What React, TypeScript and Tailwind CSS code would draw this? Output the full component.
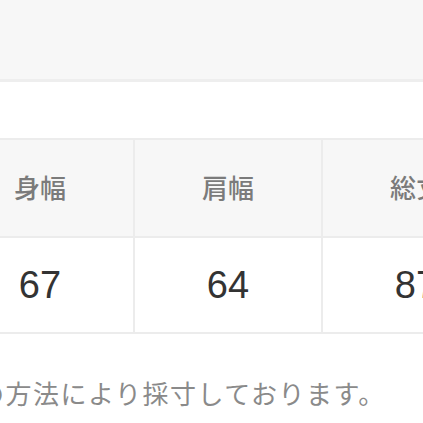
const columns = [
  { label: '身幅', value: '67' },
  { label: '肩幅', value: '64' },
  { label: '総丈', value: '87' },
]

export default function App() {
  return (
    <div className="w-[423px] h-[423px] overflow-hidden bg-white">
      {/* top band */}
      <div className="h-[82px] bg-[#f7f7f7] border-b-[3px] border-[#eeeeee]" />

      {/* size table */}
      <div className="mt-[56px] ml-[-53px] w-[600px] grid grid-cols-[186px_186px_186px] gap-[2px] bg-[#ececec] py-[2px]">
        {columns.map(col => (
          <div
            key={col.label}
            className="h-[96px] bg-[#f7f7f7] flex items-center justify-center pb-[4px] text-[26px] font-medium text-[#7b7b7b] font-['Noto_Sans_CJK_JP',sans-serif]"
          >
            {col.label}
          </div>
        ))}
        {columns.map(col => (
          <div
            key={col.value}
            className="h-[94px] bg-white flex items-center justify-center text-[38px] text-[#333333] font-['Liberation_Sans',Arial,sans-serif]"
          >
            {col.value}
          </div>
        ))}
      </div>

      {/* note */}
      <p className="mt-[43px] ml-[-22px] whitespace-nowrap text-[26px] tracking-[1.5px] leading-[32px] text-[#8a8a8a] font-['Noto_Sans_CJK_JP',sans-serif]">
        の方法により採寸しております。
      </p>
    </div>
  )
}
